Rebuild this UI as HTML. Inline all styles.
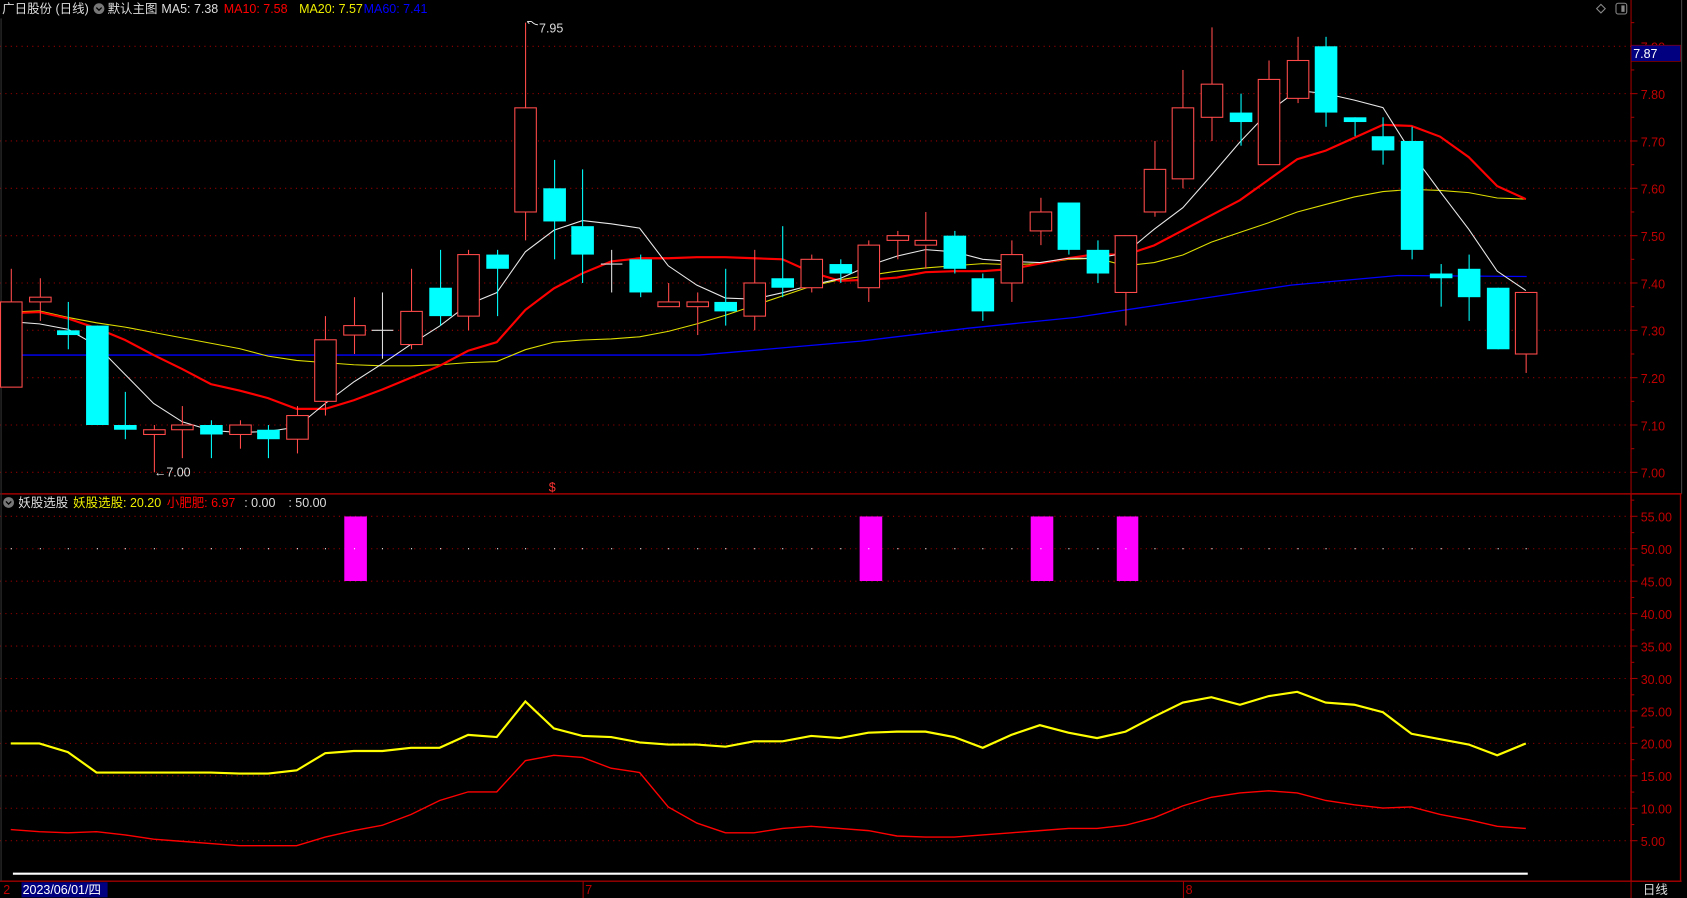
<!DOCTYPE html>
<html><head><meta charset="utf-8"><style>
html,body{margin:0;padding:0;background:#000;overflow:hidden}
svg{display:block}
text{font-family:"Liberation Sans","Noto Sans CJK SC",sans-serif;font-size:11.6px}
</style></head><body>
<svg id="s" width="1687" height="898" viewBox="0 0 1568 834.6" xmlns="http://www.w3.org/2000/svg">
<rect width="1568" height="835" fill="#000"/>
<g id="grid" stroke="#a00000" stroke-width="1" stroke-dasharray="1,4"></g>
<line x1="1516" y1="0" x2="1516" y2="835" stroke="#a00000"/>
<line x1="1563" y1="0" x2="1563" y2="459" stroke="#444"/>
<line x1="0" y1="459" x2="1563" y2="459" stroke="#a00000" stroke-width="1.3"/>
<rect x="1516" y="459" width="46" height="360" fill="none" stroke="#a00000" stroke-width="1.3"/>
<line x1="0" y1="819" x2="1563" y2="819" stroke="#a00000" stroke-width="1.3"/>
<line x1="1" y1="17" x2="1" y2="819" stroke="#333"/>
<g id="ticks" stroke="#a00000"></g>
<g id="mag" fill="#ff00ff">
<rect x="320" y="480" width="21" height="60"/><rect x="799" y="480" width="21" height="60"/>
<rect x="958" y="480" width="21" height="60"/><rect x="1038" y="480" width="20" height="60"/>
</g>
<g id="dots" fill="#fff"></g>
<g id="lines" fill="none"></g>
<g id="candles"></g>
<line x1="12" y1="812" x2="1420" y2="812" stroke="#fff" stroke-width="2"/>
<g id="labels" fill="#c00000"></g>
<rect x="1516" y="42" width="46" height="15" fill="#000080" stroke="#a00000" stroke-width="0.6"/>
<text x="1518" y="54" fill="#fff">7.87</text>
<text x="2" y="12" fill="#ddd">广日股份 (日线)</text>
<circle cx="92" cy="8" r="5" fill="#777"/><path d="M89.5 7l2.5 2.5 2.5-2.5" stroke="#000" fill="none" stroke-width="1.2"/>
<text x="100" y="12" fill="#ddd">默认主图</text>
<text x="150" y="12" fill="#ddd">MA5: 7.38</text>
<text x="208" y="12" fill="#f00">MA10: 7.58</text>
<text x="278" y="12" fill="#ee0">MA20: 7.57</text>
<text x="338" y="12" fill="#0000ff">MA60: 7.41</text>
<path d="M1488 4l4 4-4 4-4-4z" stroke="#888" fill="none"/>
<rect x="1502" y="3" width="10" height="10" rx="2" stroke="#888" fill="none"/><rect x="1507" y="5" width="3" height="6" fill="#888"/>
<path d="M490 20l4 0M490 20l2 2M494 20q3 3 6 3" stroke="#fff" fill="none" stroke-width="0.8"/>
<text x="501" y="30" fill="#ddd">7.95</text>
<text x="143" y="443" fill="#ddd">←7.00</text>
<text x="510" y="457" fill="#f33" font-size="10">$</text>
<circle cx="8" cy="467" r="5" fill="#777"/><path d="M5.5 466l2.5 2.5 2.5-2.5" stroke="#000" fill="none" stroke-width="1.2"/>
<text x="17" y="471" fill="#ddd">妖股选股</text>
<text x="68" y="471" fill="#ee0">妖股选股: 20.20</text>
<text x="155" y="471" fill="#f00">小肥肥: 6.97</text>
<text x="227" y="471" fill="#ddd">: 0.00</text>
<text x="268" y="471" fill="#ddd">: 50.00</text>
<text x="3" y="831" fill="#c00000">2</text>
<rect x="20" y="820" width="80" height="14" fill="#000080"/>
<text x="21" y="831" fill="#fff">2023/06/01/四</text>
<line x1="542" y1="819" x2="542" y2="835" stroke="#a00000"/><text x="544" y="831" fill="#c00000">7</text>
<line x1="1100" y1="819" x2="1100" y2="835" stroke="#a00000"/><text x="1102" y="831" fill="#c00000">8</text>
<text x="1527" y="831" fill="#ddd">日线</text>
</svg>
<script>
var NS="http://www.w3.org/2000/svg";
function el(p,t,a){var e=document.createElementNS(NS,t);for(var k in a)e.setAttribute(k,a[k]);document.getElementById(p).appendChild(e);return e;}
function py(p){return 439-(p-7)*440;}
function sy(v){return 510-(v-50)*6.03;}
function cx(i){return 10+i*26.57;}
for(var k=0;k<=9;k++){var y=py(7+k*0.1);el('grid','line',{x1:0,y1:y,x2:1516,y2:y});
 el('ticks','line',{x1:1516,y1:y,x2:1522,y2:y});el('ticks','line',{x1:1516,y1:y-22,x2:1519,y2:y-22});
 var t=el('labels','text',{x:1525,y:y+5});t.textContent=(7+k*0.1).toFixed(2);}
for(var v=5;v<=55;v+=5){var y=sy(v);el('grid','line',{x1:0,y1:y,x2:1516,y2:y});
 el('ticks','line',{x1:1516,y1:y,x2:1522,y2:y});el('ticks','line',{x1:1516,y1:y-15,x2:1519,y2:y-15});
 var t=el('labels','text',{x:1525,y:y+5});t.textContent=v.toFixed(2);}
var C=[[7.18,7.36,7.43,7.18],[7.36,7.37,7.41,7.32],[7.30,7.29,7.36,7.26],[7.31,7.10,7.31,7.10],[7.10,7.09,7.17,7.07],[7.08,7.09,7.10,7.00],[7.09,7.10,7.14,7.03],[7.10,7.08,7.11,7.03],[7.08,7.10,7.11,7.05],[7.09,7.07,7.10,7.03],[7.07,7.12,7.14,7.04],[7.15,7.28,7.33,7.12],[7.29,7.31,7.37,7.25],[7.30,7.30,7.38,7.24],[7.27,7.34,7.43,7.26],[7.39,7.33,7.47,7.31],[7.33,7.46,7.47,7.30],[7.46,7.43,7.47,7.33],[7.55,7.77,7.95,7.49],[7.60,7.53,7.66,7.45],[7.52,7.46,7.64,7.40],[7.44,7.44,7.47,7.38],[7.45,7.38,7.46,7.37],[7.35,7.36,7.40,7.35],[7.35,7.36,7.38,7.29],[7.36,7.34,7.43,7.31],[7.33,7.40,7.47,7.30],[7.41,7.39,7.52,7.37],[7.39,7.45,7.46,7.38],[7.44,7.42,7.45,7.40],[7.39,7.48,7.49,7.36],[7.49,7.50,7.51,7.45],[7.48,7.49,7.55,7.43],[7.50,7.43,7.51,7.42],[7.41,7.34,7.42,7.32],[7.40,7.46,7.49,7.36],[7.51,7.55,7.58,7.48],[7.57,7.47,7.57,7.46],[7.47,7.42,7.49,7.40],[7.38,7.50,7.50,7.31],[7.55,7.64,7.70,7.54],[7.62,7.77,7.85,7.60],[7.75,7.82,7.94,7.70],[7.76,7.74,7.80,7.69],[7.65,7.83,7.87,7.65],[7.79,7.87,7.92,7.78],[7.90,7.76,7.92,7.73],[7.75,7.74,7.75,7.71],[7.71,7.68,7.75,7.65],[7.70,7.47,7.73,7.45],[7.42,7.41,7.44,7.35],[7.43,7.37,7.46,7.32],[7.39,7.26,7.39,7.26],[7.25,7.38,7.38,7.21]];
C.forEach(function(c,i){var x=Math.round(cx(i))+0.5,o=c[0],cl=c[1],h=c[2],l=c[3];
 var up=cl>o,dj=cl==o,col=dj?'#ddd':(up?'#ff4a4a':'#00ffff');
 var top=py(Math.max(o,cl)),bot=py(Math.min(o,cl));
 el('dots','rect',{x:x-0.5,y:509.5,width:1,height:1});
 el('candles','line',{x1:x,y1:py(h),x2:x,y2:py(l),stroke:col,'stroke-width':1});
 if(dj){el('candles','line',{x1:x-10,y1:top,x2:x+10,y2:top,stroke:col});}
 else if(up){el('candles','rect',{x:x-10,y:top,width:20,height:Math.max(bot-top,2),fill:'#000',stroke:col,'stroke-width':1});}
 else{el('candles','rect',{x:x-10.5,y:top,width:21,height:Math.max(bot-top,2),fill:col});}
});
function pl(ys,col,w){var p=ys.map(function(y,i){return cx(i).toFixed(1)+','+y}).join(' ');el('lines','polyline',{points:p,stroke:col,'stroke-width':w});}
pl([691,691,699,718,718,718,718,718,719,719,716,700,698,698,695,695,683,685,652,677,684,685,690,692,692,694,689,689,684,686,681,680,680,685,695,683,674,681,686,680,666,653,648,655,647,643,653,655,662,682,687,692,702,691],'#ffff00',2);
pl([771,773,774,773,776,780,782,784,786,786,786,778,772,767,757,744,736,736,707,702,704,714,718,750,765,774,774,770,768,770,772,777,778,778,776,774,772,770,770,767,760,749,741,737,735,737,744,748,751,750,757,762,768,770],'#ff0000',1.3);
el('lines','polyline',{points:'0,330 650,330 800,317 900,305 1000,295 1100,280 1200,265 1300,256 1419,257',stroke:'#0000ff','stroke-width':1.2});
pl([290,289,295,300,304,309,314,319,324,331,335,337,339,340,340,339,337,336,325,318,316,315,313,308,301,293,284,275,266,260,256,252,249,247,245,246,245,241,240,247,244,237,225,216,207,197,190,183,178,176,177,179,184,185],'#dddd00',1);
pl([291,290,296,305,316,330,343,357,363,370,380,380,372,362,351,340,326,318,288,268,254,243,240,240,239,239,240,241,253,261,260,258,253,252,252,250,245,240,236,237,228,214,200,186,167,148,140,128,116,117,127,146,173,185],'#ff0000',2);
pl([299,301,306,321,348,375,392,400,402,401,397,375,355,338,320,303,283,272,234,214,205,208,212,247,265,277,278,272,265,259,247,238,232,234,241,243,244,240,240,235,213,193,163,132,104,84,87,93,100,142,178,213,252,270],'#e8e8e8',1);
</script>
</body></html>
